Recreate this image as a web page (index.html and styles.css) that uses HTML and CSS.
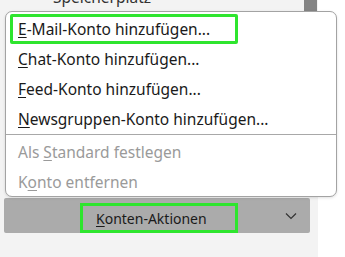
FILE: index.html
```html
<!DOCTYPE html>
<html>
<head>
<meta charset="utf-8">
<link rel="stylesheet" href="styles.css">
</head>
<body>
<div class="page">
  <div class="panel">
    <div class="top">
      <span class="storage">Speicherplatz</span>
      <span class="thumb"></span>
    </div>
    <div class="spacer"></div>
    <div class="actions">
      <span class="btn-label"><u>K</u>onten-Aktionen</span>
      <svg class="chev" width="12" height="8" viewBox="0 0 12 8"><path d="M1 1.5 L6 6.5 L11 1.5" fill="none" stroke="#333" stroke-width="1.2"/></svg>
    </div>
  </div>
  <div class="menu">
    <div class="item focus"><u>E</u>-Mail-Konto hinzufügen...</div>
    <div class="item"><u>C</u>hat-Konto hinzufügen...</div>
    <div class="item"><u>F</u>eed-Konto hinzufügen...</div>
    <div class="item"><u>N</u>ewsgruppen-Konto hinzufügen...</div>
    <div class="sep"></div>
    <div class="item dis">Als <u>S</u>tandard festlegen</div>
    <div class="item dis">K<u>o</u>nto entfernen</div>
  </div>
</div>
</body>
</html>
```
FILE: styles.css
```css
html, body {
  margin: 0;
  padding: 0;
  background: #ffffff;
}
body {
  font-family: "Noto Sans", "Open Sans", sans-serif;
  font-size: 15.5px;
  color: #1a1a1a;
}
.page {
  position: relative;
  width: 345px;
  height: 257px;
  overflow: hidden;
}
.panel {
  width: 318px;
  height: 257px;
  background: #f3f3f3;
  display: flex;
  flex-direction: column;
}
.top {
  height: 11px;
  display: flex;
  position: relative;
}
.storage {
  margin-left: 53px;
  margin-top: -13px;
  line-height: 20px;
  color: #333;
}
.thumb {
  margin-left: auto;
  margin-right: 1px;
  width: 13px;
  height: 11px;
  background: #848484;
}
.spacer {
  height: 187px;
}
.actions {
  margin-left: 4px;
  width: 306px;
  height: 35px;
  box-sizing: border-box;
  background: #ababab;
  border-radius: 2px;
  display: flex;
  align-items: stretch;
}
.btn-label {
  margin-left: 76px;
  margin-top: 5px;
  width: 158px;
  box-sizing: border-box;
  border: 3px solid #2ee52e;
  padding-left: 13px;
  display: flex;
  align-items: center;
  font-size: 14px;
  color: #1a1a1a;
  white-space: nowrap;
}
.chev {
  margin-left: auto;
  margin-right: 13px;
  align-self: center;
}
.menu {
  position: absolute;
  left: 5px;
  top: 11px;
  width: 332px;
  height: 186px;
  box-sizing: border-box;
  background: #ffffff;
  border: 1px solid #a3a3a3;
  border-radius: 7px;
  padding-top: 2px;
  box-shadow: 0 1px 3px rgba(0,0,0,0.12);
}
.item {
  height: 30px;
  line-height: 30px;
  padding-left: 12px;
  white-space: nowrap;
}
.item.focus {
  margin-left: 4px;
  width: 228px;
  box-sizing: border-box;
  border: 3px solid #2ee52e;
  border-radius: 2px;
  padding-left: 5px;
  line-height: 24px;
}
.item.dis {
  color: #9a9a9a;
}
.sep {
  height: 1px;
  background: #a8a8a8;
  margin: 0 0 2px 0;
}
u {
  text-decoration-thickness: 1px;
  text-underline-offset: 2px;
}
```
